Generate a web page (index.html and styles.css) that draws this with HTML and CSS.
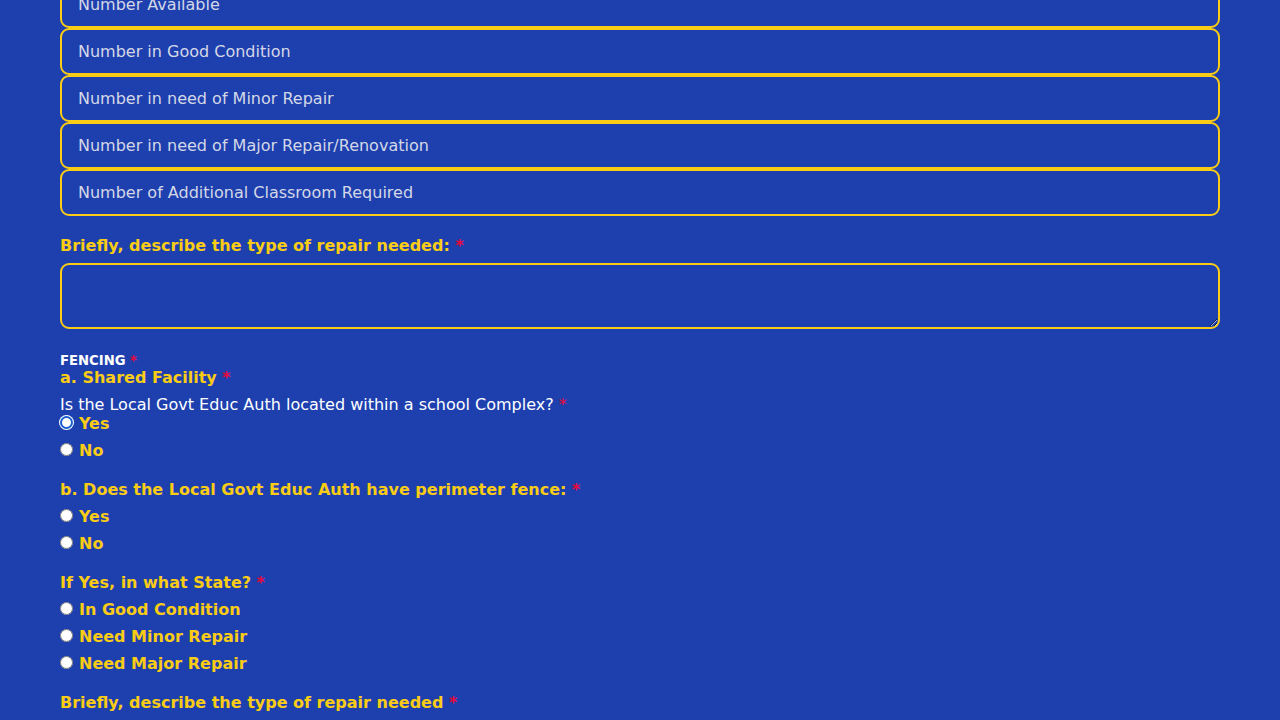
FILE: index.html
```html
<!DOCTYPE html>
<html lang="en">
<head>
<meta charset="utf-8">
<title>Facility Form</title>
<link rel="stylesheet" href="styles.css">
</head>
<body>
<main class="form">
  <div class="inputs">
    <input class="box" type="text" placeholder="Number Available">
    <input class="box" type="text" placeholder="Number in Good Condition">
    <input class="box" type="text" placeholder="Number in need of Minor Repair">
    <input class="box" type="text" placeholder="Number in need of Major Repair/Renovation">
    <input class="box" type="text" placeholder="Number of Additional Classroom Required">
  </div>

  <div class="field">
    <label class="label" for="repair1">Briefly, describe the type of repair needed: <span class="req">*</span></label>
    <textarea id="repair1" class="area" rows="2"></textarea>
  </div>

  <div class="fence-title">FENCING <span class="req">*</span></div>
  <div class="label">a. Shared Facility <span class="req">*</span></div>
  <div class="question">Is the Local Govt Educ Auth located within a school Complex? <span class="req">*</span></div>
  <div class="radios">
    <label class="opt"><input class="focused" type="radio" name="complex"><span>Yes</span></label>
    <label class="opt"><input type="radio" name="complex"><span>No</span></label>
  </div>

  <div class="group">
    <div class="label">b. Does the Local Govt Educ Auth have perimeter fence: <span class="req">*</span></div>
    <div class="radios spaced">
      <label class="opt"><input type="radio" name="fence"><span>Yes</span></label>
      <label class="opt"><input type="radio" name="fence"><span>No</span></label>
    </div>
  </div>

  <div class="group">
    <div class="label">If Yes, in what State? <span class="req">*</span></div>
    <div class="radios spaced">
      <label class="opt"><input type="radio" name="state"><span>In Good Condition</span></label>
      <label class="opt"><input type="radio" name="state"><span>Need Minor Repair</span></label>
      <label class="opt"><input type="radio" name="state"><span>Need Major Repair</span></label>
    </div>
  </div>

  <div class="group">
    <div class="label">Briefly, describe the type of repair needed <span class="req">*</span></div>
  </div>
</main>
</body>
</html>
```
FILE: styles.css
```css
html, body {
  margin: 0;
  padding: 0;
  background: #1e40af;
  height: 100%;
  overflow: hidden;
}
body {
  font-family: "DejaVu Sans", sans-serif;
  font-size: 16px;
  line-height: 19px;
  color: #ffffff;
}
.form {
  padding: 0 60px;
  margin-top: -19px;
}
.inputs {
  display: flex;
  flex-direction: column;
}
.box {
  display: block;
  box-sizing: border-box;
  width: 100%;
  height: 47px;
  margin: 0;
  padding: 12px 16px;
  border: 2px solid #facc15;
  border-radius: 9px;
  background: #1e40af;
  color: #ffffff;
  font-family: "DejaVu Sans", sans-serif;
  font-size: 16px;
  line-height: 19px;
  outline: none;
}
.box::placeholder {
  color: #d4d8e6;
  opacity: 1;
}
.field {
  margin-top: 20px;
}
.label {
  display: block;
  color: #facc15;
  font-weight: bold;
  font-size: 16px;
  line-height: 19px;
}
.field .label {
  margin-bottom: 8px;
}
.req {
  color: #e8083a;
}
.area {
  display: block;
  box-sizing: border-box;
  width: 100%;
  height: 66px;
  margin: 0;
  padding: 12px 16px;
  border: 2px solid #facc15;
  border-radius: 9px;
  background: #1e40af;
  color: #ffffff;
  font-family: "DejaVu Sans", sans-serif;
  font-size: 16px;
  line-height: 19px;
  outline: none;
}
.fence-title {
  margin-top: 24px;
  font-size: 13.2px;
  line-height: 15px;
  font-weight: bold;
  color: #ffffff;
}
.question {
  margin-top: 8px;
  color: #ffffff;
}
.radios {
  display: flex;
  flex-direction: column;
  gap: 8px;
}
.radios.spaced {
  margin-top: 8px;
}
.opt {
  display: flex;
  align-items: center;
  height: 19px;
  color: #facc15;
  font-weight: bold;
}
.opt input {
  width: 13px;
  height: 13px;
  margin: 0 6px 2px 0;
}
.opt input.focused {
  appearance: none;
  -webkit-appearance: none;
  box-sizing: border-box;
  border-radius: 50%;
  background: #ffffff;
  border: 2px solid #1a5fd0;
  box-shadow: 0 0 0 1px #ffffff;
}
.group {
  margin-top: 20px;
}
```
